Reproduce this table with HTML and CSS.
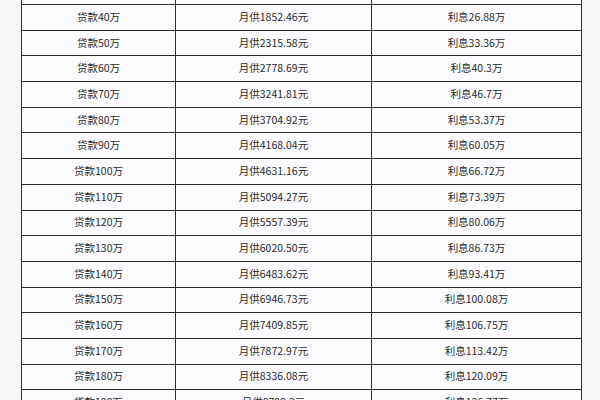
FILE: index.html
```html
<!DOCTYPE html>
<html lang="zh-CN">
<head>
<meta charset="utf-8">
<link rel="stylesheet" href="styles.css">
</head>
<body>
<div class="sheet">
<div class="loan">
<div class="cell cut"></div><div class="cell cut"></div><div class="cell cut"></div>
<div class="cell">贷款40万</div><div class="cell">月供1852.46元</div><div class="cell">利息26.88万</div>
<div class="cell">贷款50万</div><div class="cell">月供2315.58元</div><div class="cell">利息33.36万</div>
<div class="cell">贷款60万</div><div class="cell">月供2778.69元</div><div class="cell">利息40.3万</div>
<div class="cell">贷款70万</div><div class="cell">月供3241.81元</div><div class="cell">利息46.7万</div>
<div class="cell">贷款80万</div><div class="cell">月供3704.92元</div><div class="cell">利息53.37万</div>
<div class="cell">贷款90万</div><div class="cell">月供4168.04元</div><div class="cell">利息60.05万</div>
<div class="cell">贷款100万</div><div class="cell">月供4631.16元</div><div class="cell">利息66.72万</div>
<div class="cell">贷款110万</div><div class="cell">月供5094.27元</div><div class="cell">利息73.39万</div>
<div class="cell">贷款120万</div><div class="cell">月供5557.39元</div><div class="cell">利息80.06万</div>
<div class="cell">贷款130万</div><div class="cell">月供6020.50元</div><div class="cell">利息86.73万</div>
<div class="cell">贷款140万</div><div class="cell">月供6483.62元</div><div class="cell">利息93.41万</div>
<div class="cell">贷款150万</div><div class="cell">月供6946.73元</div><div class="cell">利息100.08万</div>
<div class="cell">贷款160万</div><div class="cell">月供7409.85元</div><div class="cell">利息106.75万</div>
<div class="cell">贷款170万</div><div class="cell">月供7872.97元</div><div class="cell">利息113.42万</div>
<div class="cell">贷款180万</div><div class="cell">月供8336.08元</div><div class="cell">利息120.09万</div>
<div class="cell">贷款190万</div><div class="cell">月供8799.2元</div><div class="cell">利息126.77万</div>
</div>
</div>
</body>
</html>
```
FILE: styles.css
```css
html, body {
  margin: 0;
  padding: 0;
  background: #f7f7f8;
  overflow: hidden;
  height: 400px;
}
.sheet {
  padding-left: 21px;
}
.loan {
  display: grid;
  grid-template-columns: 154px 196px 210px;
  grid-template-rows: 5px;
  grid-auto-rows: 25.7px;
  width: 561px;
  border-left: 1px solid #2b2b2b;
  box-sizing: border-box;
  background: #fcfcfe;
  font-family: "Noto Sans CJK SC", "Noto Sans", sans-serif;
  font-size: 10.5px;
  color: #2a2a2a;
}
.cell {
  box-sizing: border-box;
  border-right: 1px solid #2b2b2b;
  border-bottom: 1px solid #2b2b2b;
  display: flex;
  align-items: center;
  justify-content: center;
  padding-bottom: 1px;
  white-space: nowrap;
  line-height: 14px;
}
```
